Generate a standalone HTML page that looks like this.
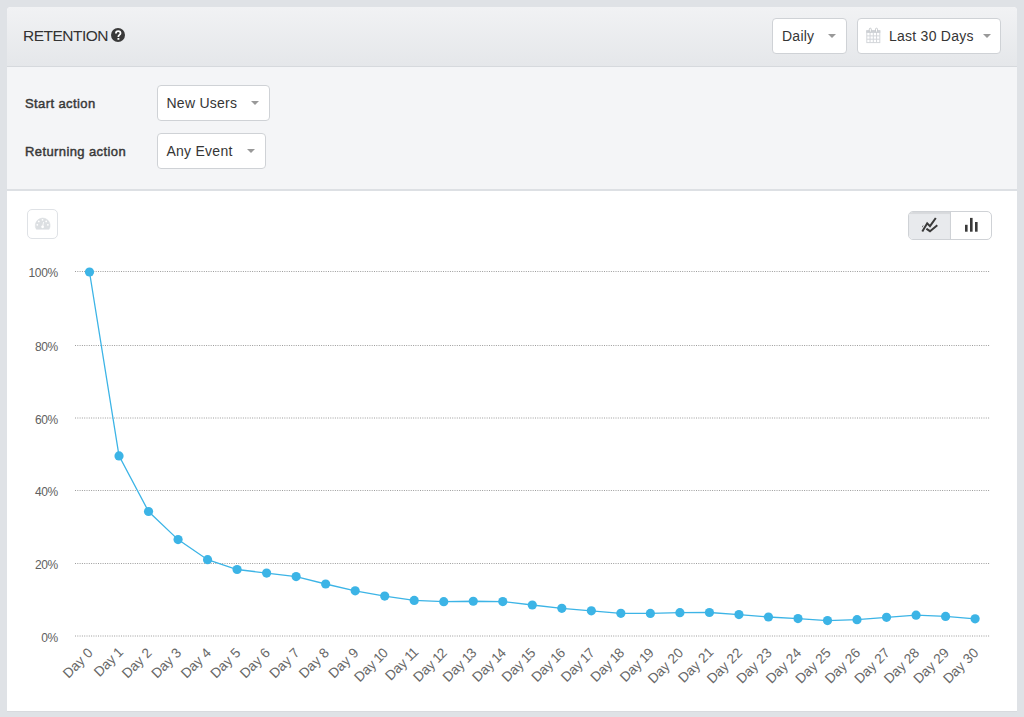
<!DOCTYPE html>
<html><head><meta charset="utf-8">
<style>
*{box-sizing:border-box;margin:0;padding:0}
html,body{width:1024px;height:717px;overflow:hidden;background:#dfe2e6;font-family:"Liberation Sans",sans-serif;color:#333}
#panel{position:absolute;left:7px;top:7px;width:1010px;height:704px;background:#fff;border-radius:4px 4px 0 0;overflow:hidden;box-shadow:0 1px 0 rgba(0,0,0,.03)}
#hdr{position:absolute;left:0;top:0;width:1010px;height:60px;background:linear-gradient(#f1f2f4,#e5e7ea);border-bottom:1px solid #d6d9dd}
#title{position:absolute;left:16px;top:20px;font-size:15.5px;color:#333;letter-spacing:-0.5px}
#q{position:absolute;left:104px;top:21px;width:14px;height:14px;border-radius:50%;background:#3a3a3a;color:#fff;font-size:11px;font-weight:bold;text-align:center;line-height:14px}
.dd{position:absolute;background:#fff;border:1px solid #cfd2d6;border-radius:4px;height:36px;font-size:14px;color:#353535;line-height:34px;letter-spacing:0.25px}
.dd .t{position:absolute;top:0}
.caret{position:absolute;width:0;height:0;border-left:4px solid transparent;border-right:4px solid transparent;border-top:4.5px solid #999}
#filters{position:absolute;left:0;top:60px;width:1010px;height:124px;background:#f4f5f7;border-bottom:2px solid #dde0e4}
.lbl{position:absolute;left:18px;font-size:13px;font-weight:normal;color:#383838;letter-spacing:0.4px;-webkit-text-stroke:0.45px #383838}
#chart{position:absolute;left:0;top:0}
#gauge{position:absolute;left:20px;top:202px;width:31px;height:30px;border:1.5px solid #dfe2e6;border-radius:5px;background:#fff}
#toggle{position:absolute;left:901px;top:204px;width:84px;height:29px;border:1px solid #cfd2d6;border-radius:5px;overflow:hidden;background:#fff}
#toggle .a{position:absolute;left:0;top:0;width:42px;height:27px;background:#e8eaed;border-right:1px solid #cfd2d6;box-shadow:inset 0 2px 1px rgba(0,0,0,.07)}
</style></head><body>
<div id="panel">
 <div id="hdr">
  <div id="title">RETENTION</div>
  <svg style="position:absolute;left:104px;top:21px" width="14" height="14" viewBox="0 0 14 14"><circle cx="7" cy="7" r="7" fill="#3a3a3a"/><path d="M4.9 5.5C4.9 4 5.9 3.2 7.2 3.2C8.6 3.2 9.5 4 9.5 5.2C9.5 6.8 7.5 6.9 7.4 8.5V9" fill="none" stroke="#fff" stroke-width="1.8"/><rect x="6.45" y="10" width="1.9" height="1.75" fill="#fff"/></svg>
  <div class="dd" style="left:765px;top:11px;width:75px"><span class="t" style="left:9px">Daily</span><span class="caret" style="left:55px;top:15px"></span></div>
  <div class="dd" style="left:850px;top:11px;width:144px">
   
   <span class="t" style="left:31px">Last 30 Days</span><span class="caret" style="left:125px;top:15px"></span></div>
 </div>
 <div id="filters">
  <div class="lbl" style="top:29px">Start action</div>
  <div class="lbl" style="top:76.5px">Returning action</div>
  <div class="dd" style="left:150px;top:18px;width:113px"><span class="t" style="left:8.5px">New Users</span><span class="caret" style="left:93px;top:15px"></span></div>
  <div class="dd" style="left:150px;top:66px;width:109px"><span class="t" style="left:8.5px">Any Event</span><span class="caret" style="left:89px;top:15px"></span></div>
 </div>
 <div id="gauge"></div>
 <div id="toggle"><div class="a"></div>
  
 </div>
</div>
<svg id="chart" width="1024" height="717" style="position:absolute;left:0;top:0">
 <g stroke="#9c9c9c" stroke-width="1" stroke-dasharray="1,1.3"><line x1="75" y1="271.5" x2="989.5" y2="271.5"/><line x1="75" y1="345.5" x2="989.5" y2="345.5"/><line x1="75" y1="418.0" x2="989.5" y2="418.0"/><line x1="75" y1="490.5" x2="989.5" y2="490.5"/><line x1="75" y1="563.5" x2="989.5" y2="563.5"/><line x1="75" y1="636.0" x2="989.5" y2="636.0"/></g>
 <g font-family="Liberation Sans" font-size="12" letter-spacing="-0.3" fill="#606060" text-anchor="end"><text x="58" y="277.1">100%</text><text x="58" y="351.1">80%</text><text x="58" y="423.6">60%</text><text x="58" y="496.1">40%</text><text x="58" y="569.1">20%</text><text x="58" y="641.6">0%</text></g>
 <g font-family="Liberation Sans" font-size="13.7" fill="#686868" text-anchor="end"><text transform="translate(93.70,653.7) rotate(-45)">Day 0</text><text transform="translate(123.22,653.7) rotate(-45)">Day<tspan letter-spacing="-1"> </tspan><tspan letter-spacing="-1.2">1</tspan></text><text transform="translate(152.74,653.7) rotate(-45)">Day 2</text><text transform="translate(182.26,653.7) rotate(-45)">Day 3</text><text transform="translate(211.78,653.7) rotate(-45)">Day 4</text><text transform="translate(241.30,653.7) rotate(-45)">Day 5</text><text transform="translate(270.82,653.7) rotate(-45)">Day 6</text><text transform="translate(300.34,653.7) rotate(-45)">Day 7</text><text transform="translate(329.86,653.7) rotate(-45)">Day 8</text><text transform="translate(359.38,653.7) rotate(-45)">Day 9</text><text transform="translate(388.90,653.7) rotate(-45)">Day<tspan letter-spacing="-1"> </tspan><tspan letter-spacing="-1.2">1</tspan>0</text><text transform="translate(418.42,653.7) rotate(-45)">Day<tspan letter-spacing="-1"> </tspan><tspan letter-spacing="-1.2">1</tspan><tspan letter-spacing="-1.2">1</tspan></text><text transform="translate(447.94,653.7) rotate(-45)">Day<tspan letter-spacing="-1"> </tspan><tspan letter-spacing="-1.2">1</tspan>2</text><text transform="translate(477.46,653.7) rotate(-45)">Day<tspan letter-spacing="-1"> </tspan><tspan letter-spacing="-1.2">1</tspan>3</text><text transform="translate(506.98,653.7) rotate(-45)">Day<tspan letter-spacing="-1"> </tspan><tspan letter-spacing="-1.2">1</tspan>4</text><text transform="translate(536.50,653.7) rotate(-45)">Day<tspan letter-spacing="-1"> </tspan><tspan letter-spacing="-1.2">1</tspan>5</text><text transform="translate(566.02,653.7) rotate(-45)">Day<tspan letter-spacing="-1"> </tspan><tspan letter-spacing="-1.2">1</tspan>6</text><text transform="translate(595.54,653.7) rotate(-45)">Day<tspan letter-spacing="-1"> </tspan><tspan letter-spacing="-1.2">1</tspan>7</text><text transform="translate(625.06,653.7) rotate(-45)">Day<tspan letter-spacing="-1"> </tspan><tspan letter-spacing="-1.2">1</tspan>8</text><text transform="translate(654.58,653.7) rotate(-45)">Day<tspan letter-spacing="-1"> </tspan><tspan letter-spacing="-1.2">1</tspan>9</text><text transform="translate(684.10,653.7) rotate(-45)">Day 20</text><text transform="translate(713.62,653.7) rotate(-45)">Day 2<tspan letter-spacing="-1.2">1</tspan></text><text transform="translate(743.14,653.7) rotate(-45)">Day 22</text><text transform="translate(772.66,653.7) rotate(-45)">Day 23</text><text transform="translate(802.18,653.7) rotate(-45)">Day 24</text><text transform="translate(831.70,653.7) rotate(-45)">Day 25</text><text transform="translate(861.22,653.7) rotate(-45)">Day 26</text><text transform="translate(890.74,653.7) rotate(-45)">Day 27</text><text transform="translate(920.26,653.7) rotate(-45)">Day 28</text><text transform="translate(949.78,653.7) rotate(-45)">Day 29</text><text transform="translate(979.30,653.7) rotate(-45)">Day 30</text></g>

 <path d="M36.3 229.2 A7.4 7.4 0 1 1 49.1 229.2 Z" fill="#dcdfe2" stroke="#dcdfe2" stroke-width="0.6" stroke-linejoin="round"/>
 <g fill="#fff"><circle cx="42.5" cy="219.8" r="0.9"/><circle cx="38.8" cy="221.4" r="0.9"/><circle cx="46.2" cy="221.4" r="0.9"/><circle cx="37.3" cy="224.8" r="0.9"/><circle cx="47.9" cy="224.8" r="0.9"/><circle cx="42.6" cy="226.8" r="1.4"/></g>
 <path d="M42.6 226.8 L43.6 222" stroke="#fff" stroke-width="0.8"/>
 <g fill="none" stroke-linecap="butt" stroke-linejoin="miter">
  <path d="M922.5 226.2 L930 231.2 L937.3 225.3" stroke="#3a3a3a" stroke-width="2"/>
  <path d="M922.3 231.6 L927.2 223.3 L930 226.1 L935.8 218" stroke="#e8eaed" stroke-width="4.2"/>
  <path d="M922.3 231.6 L927.2 223.3 L930 226.1 L935.8 218" stroke="#3a3a3a" stroke-width="2"/>
 </g>
 <g fill="#3a3a3a"><rect x="965" y="224.8" width="2.6" height="6.9"/><rect x="970" y="217.9" width="2.6" height="13.8"/><rect x="975" y="222" width="2.6" height="9.7"/></g>

 <g fill="none" stroke="#d3d6da" stroke-width="1">
  <rect x="866.8" y="30.8" width="13" height="11.8"/>
  <path d="M870.05 32.5V42.6M873.3 32.5V42.6M876.55 32.5V42.6M866.8 35.9H879.8M866.8 39.2H879.8"/>
 </g>
 <rect x="866.3" y="30.3" width="14" height="2.6" fill="#ced1d5"/>
 <g fill="#fff" stroke="#c3c6ca" stroke-width="0.9"><rect x="869.3" y="28.2" width="2" height="4" rx="1"/><rect x="875.5" y="28.2" width="2" height="4" rx="1"/></g>
 <polyline points="89.50,272.00 119.02,455.90 148.54,511.50 178.06,539.60 207.58,559.70 237.10,569.50 266.62,573.05 296.14,576.60 325.66,584.00 355.18,590.80 384.70,596.10 414.22,600.40 443.74,601.70 473.26,601.25 502.78,601.60 532.30,605.00 561.82,608.30 591.34,610.80 620.86,613.30 650.38,613.40 679.90,612.70 709.42,612.50 738.94,614.60 768.46,617.00 797.98,618.60 827.50,620.60 857.02,619.70 886.54,617.30 916.06,615.20 945.58,616.40 975.10,618.80" fill="none" stroke="#3cb4e6" stroke-width="1.3"/>
 <g fill="#3cb4e6"><circle cx="89.50" cy="272.00" r="4.6"/><circle cx="119.02" cy="455.90" r="4.6"/><circle cx="148.54" cy="511.50" r="4.6"/><circle cx="178.06" cy="539.60" r="4.6"/><circle cx="207.58" cy="559.70" r="4.6"/><circle cx="237.10" cy="569.50" r="4.6"/><circle cx="266.62" cy="573.05" r="4.6"/><circle cx="296.14" cy="576.60" r="4.6"/><circle cx="325.66" cy="584.00" r="4.6"/><circle cx="355.18" cy="590.80" r="4.6"/><circle cx="384.70" cy="596.10" r="4.6"/><circle cx="414.22" cy="600.40" r="4.6"/><circle cx="443.74" cy="601.70" r="4.6"/><circle cx="473.26" cy="601.25" r="4.6"/><circle cx="502.78" cy="601.60" r="4.6"/><circle cx="532.30" cy="605.00" r="4.6"/><circle cx="561.82" cy="608.30" r="4.6"/><circle cx="591.34" cy="610.80" r="4.6"/><circle cx="620.86" cy="613.30" r="4.6"/><circle cx="650.38" cy="613.40" r="4.6"/><circle cx="679.90" cy="612.70" r="4.6"/><circle cx="709.42" cy="612.50" r="4.6"/><circle cx="738.94" cy="614.60" r="4.6"/><circle cx="768.46" cy="617.00" r="4.6"/><circle cx="797.98" cy="618.60" r="4.6"/><circle cx="827.50" cy="620.60" r="4.6"/><circle cx="857.02" cy="619.70" r="4.6"/><circle cx="886.54" cy="617.30" r="4.6"/><circle cx="916.06" cy="615.20" r="4.6"/><circle cx="945.58" cy="616.40" r="4.6"/><circle cx="975.10" cy="618.80" r="4.6"/></g>
</svg>
</body></html>
